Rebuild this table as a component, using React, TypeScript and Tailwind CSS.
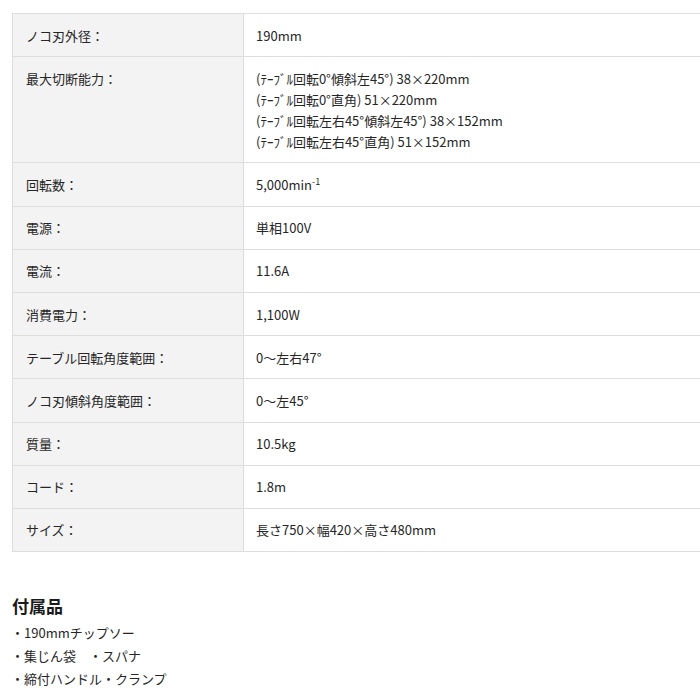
import React from "react";

const rows: { label: string; value: React.ReactNode }[] = [
  { label: "ノコ刃外径：", value: "190mm" },
  {
    label: "最大切断能力：",
    value: (
      <>
        <div>(ﾃｰﾌﾞﾙ回転0°傾斜左45°) 38×220mm</div>
        <div>(ﾃｰﾌﾞﾙ回転0°直角) 51×220mm</div>
        <div>(ﾃｰﾌﾞﾙ回転左右45°傾斜左45°) 38×152mm</div>
        <div>(ﾃｰﾌﾞﾙ回転左右45°直角) 51×152mm</div>
      </>
    ),
  },
  {
    label: "回転数：",
    value: (
      <>
        5,000min<sup className="text-[9px] -top-[5px]">-1</sup>
      </>
    ),
  },
  { label: "電源：", value: "単相100V" },
  { label: "電流：", value: "11.6A" },
  { label: "消費電力：", value: "1,100W" },
  { label: "テーブル回転角度範囲：", value: "0〜左右47°" },
  { label: "ノコ刃傾斜角度範囲：", value: "0〜左45°" },
  { label: "質量：", value: "10.5kg" },
  { label: "コード：", value: "1.8m" },
  { label: "サイズ：", value: "長さ750×幅420×高さ480mm" },
];

export default function App() {
  return (
    <div
      className="w-[700px] h-[700px] overflow-hidden bg-white text-[#262626] pl-3 pt-[13px]"
      style={{ fontFamily: '"Noto Sans CJK JP", "Noto Sans", sans-serif' }}
    >
      <div className="border-t border-l border-[#dddddd]">
        {rows.map((r, i) => (
          <div key={i} className="flex border-b border-[#dddddd] text-[13px] leading-[21px]">
            <div className="w-[231px] shrink-0 bg-[#f3f3f3] border-r border-[#dddddd] px-[13px] py-[10.6px]">
              {r.label}
            </div>
            <div className="flex-1 px-[12px] py-[10.6px]">{r.value}</div>
          </div>
        ))}
      </div>

      <h3 className="mt-[43px] text-[17px] font-bold leading-[22px] text-[#1a1a1a]">付属品</h3>
      <ul className="mt-[4px] text-[13px] leading-[23px] -ml-[1px]">
        <li>・190mmチップソー</li>
        <li>・集じん袋　・スパナ</li>
        <li>・締付ハンドル・クランプ</li>
      </ul>
    </div>
  );
}
